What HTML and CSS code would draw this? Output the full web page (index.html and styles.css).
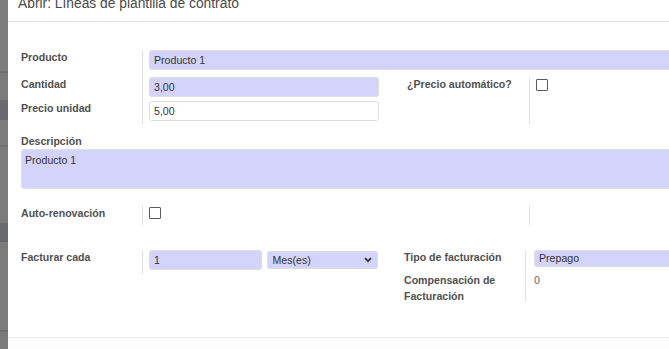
FILE: index.html
```html
<!DOCTYPE html>
<html lang="es">
<head>
    <meta charset="UTF-8">
    <meta name="viewport" content="width=device-width, initial-scale=1.0">
    <title>Abrir: Líneas de plantilla de contrato</title>
    <link rel="stylesheet" href="styles.css">
</head>
<body>
    <div class="backdrop"></div>

    <div class="modal">
        <header class="modal-header">
            <h4>Abrir: Líneas de plantilla de contrato</h4>
        </header>

        <div class="modal-body">
            <!-- producto / cantidad / precio -->
            <div class="group group-main">
                <div class="label">Producto</div>
                <div class="field span-rest"><div class="input required">Producto 1</div></div>

                <div class="label">Cantidad</div>
                <div class="field"><div class="input required">3,00</div></div>
                <div class="spacer"></div>
                <div class="label">¿Precio automático?</div>
                <div class="field span-two"><span class="checkbox"></span></div>

                <div class="label">Precio unidad</div>
                <div class="field"><div class="input">5,00</div></div>
            </div>

            <div class="label desc-label">Descripción</div>
            <div class="textarea">Producto 1</div>

            <div class="group group-renew">
                <div class="label">Auto-renovación</div>
                <div class="field"><span class="checkbox"></span></div>
                <div class="spacer"></div>
                <div class="spacer"></div>
                <div class="field"></div>
            </div>

            <div class="group-billing">
                <div class="subgroup sub-left">
                    <div class="label">Facturar cada</div>
                    <div class="field field-inline">
                        <div class="input required small-input">1</div>
                        <div class="select required">
                            <span>Mes(es)</span>
                            <svg width="8" height="6" viewBox="0 0 8 6"><path d="M1 1.2 L4 4.2 L7 1.2" fill="none" stroke="#333" stroke-width="1.8"/></svg>
                        </div>
                    </div>
                </div>
                <div class="subgroup sub-right">
                    <div class="label">Tipo de facturación</div>
                    <div class="field"><div class="input required short">Prepago</div></div>
                    <div class="label two-lines">Compensación de Facturación</div>
                    <div class="field"><span class="value">0</span></div>
                </div>
            </div>
        </div>

        <footer class="modal-footer"></footer>
    </div>
</body>
</html>
```

FILE: styles.css
```css
* {
    margin: 0;
    padding: 0;
    box-sizing: border-box;
    font-family: "Liberation Sans", Arial, sans-serif;
}

body {
    display: flex;
    width: 669px;
    height: 349px;
    overflow: hidden;
    background-color: #7a7a7a;
    color: #505050;
}

.backdrop {
    width: 8px;
    flex-shrink: 0;
    background: linear-gradient(to bottom,
        #7d7d7d 0, #7d7d7d 71px, #6f6f6f 71px, #6f6f6f 73px,
        #7b7b7b 73px, #7b7b7b 100px, #696a70 100px, #696a70 120px,
        #7b7b7b 120px, #7b7b7b 145px, #707070 145px, #707070 147px,
        #7b7b7b 147px, #7b7b7b 223px, #686970 223px, #686970 242px,
        #7b7b7b 242px, #7b7b7b 330px, #6e6e6e 330px, #6e6e6e 332px,
        #7b7b7b 332px);
}

.modal {
    width: 740px;
    flex-shrink: 0;
    background-color: #fff;
    display: flex;
    flex-direction: column;
}

.modal-header {
    height: 22px;
    padding: 0 10px;
    border-bottom: 1px solid #dcdcf0;
    overflow: hidden;
}

.modal-header h4 {
    margin-top: -5px;
    font-size: 13.8px;
    line-height: 18px;
    font-weight: normal;
    color: #4a4a4a;
}

.modal-body {
    flex: 1;
    padding: 28px 0 0 13px;
    border-bottom: 1px solid #ececec;
}

.modal-footer {
    height: 11px;
    background-color: #fdfdfd;
}

.label {
    font-size: 10.6px;
    font-weight: bold;
    line-height: 14px;
}

.group {
    display: grid;
    grid-template-columns: 121px 237px 28px 122px 1fr;
}

.group-main {
    grid-template-rows: 27px 24px 23px;
}

.field {
    border-left: 1px solid #e2e2e2;
    padding-left: 6px;
}

.span-rest {
    grid-column: 2 / -1;
}

.span-two {
    grid-row: span 2;
    padding-top: 2px;
}

.input {
    height: 20px;
    border: 1px solid #dedede;
    border-radius: 3px;
    padding: 0 4px;
    font-size: 10.6px;
    line-height: 18px;
    color: #333;
    background-color: #fff;
}

.required {
    background-color: #d3d3fc;
}

.checkbox {
    display: block;
    width: 12px;
    height: 12px;
    border: 1.5px solid #5c5c5c;
    border-radius: 1px;
    background-color: #fff;
}

.desc-label {
    margin-top: 10px;
    margin-bottom: 1px;
}

.textarea {
    height: 40px;
    padding: 3px 3px;
    border: 1px solid #e0e0e0;
    border-radius: 3px;
    background-color: #d3d3fc;
    font-size: 10.6px;
    line-height: 14px;
    color: #333;
}

.group-renew {
    margin-top: 16px;
    grid-template-rows: 20px;
}

.group-renew .label {
    padding-top: 1px;
}

.group-renew .field .checkbox {
    margin-top: 2px;
}

.group-billing {
    display: flex;
    margin-top: 25px;
    gap: 26px;
}

.subgroup {
    display: grid;
}

.sub-left {
    grid-template-columns: 121px 236px;
    grid-template-rows: 24px;
    align-self: flex-start;
}

.sub-right {
    flex: 1;
    grid-template-columns: 121px 1fr;
    grid-template-rows: 21px 31px;
}

.sub-right .field {
    padding-left: 8px;
}

.field-inline {
    display: flex;
    gap: 5px;
}

.small-input {
    width: 114px;
}

.select {
    width: 111px;
    height: 18px;
    margin-top: 1px;
    border: 1px solid #dedede;
    border-radius: 3px;
    padding: 0 5px 0 4px;
    font-size: 10.6px;
    line-height: 16px;
    color: #333;
    display: flex;
    justify-content: space-between;
    align-items: center;
}

.short {
    height: 17px;
    line-height: 15px;
}

.two-lines {
    line-height: 16px;
    padding-top: 1px;
}

.value {
    display: block;
    font-size: 10.6px;
    line-height: 16px;
    padding-top: 1px;
    color: #666;
}
```
